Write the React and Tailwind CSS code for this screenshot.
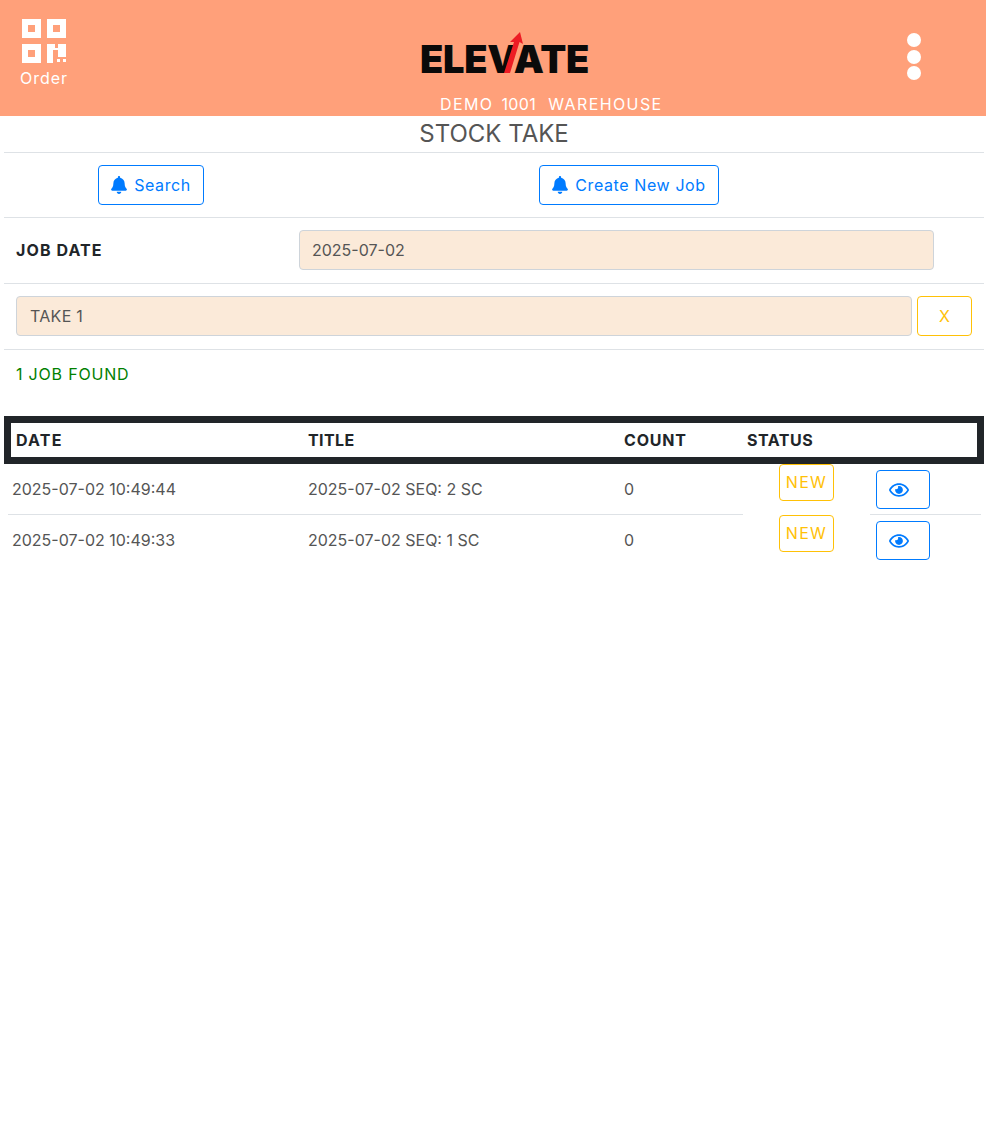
import React from 'react';
import { FaRegEye } from 'react-icons/fa';

const jobs = [
  { date: '2025-07-02 10:49:44', title: '2025-07-02 SEQ: 2 SC', count: 0 },
  { date: '2025-07-02 10:49:33', title: '2025-07-02 SEQ: 1 SC', count: 0 },
];

function QrIcon() {
  return (
    <svg width="44" height="44" viewBox="0 0 44 44" fill="#fff">
      <path fillRule="evenodd" d="M0 0h19v19H0zM6 6v7h7V6z" />
      <path fillRule="evenodd" d="M25 0h19v19H25zM31 6v7h7V6z" />
      <path fillRule="evenodd" d="M0 25h19v19H0zM6 31v7h7v-7z" />
      <path d="M25 25h8v4h3v-4h8v13h-8v-7h-5v13h-6z" />
      <path d="M35 40h3v3h-3zM41 40h3v3h-3z" />
    </svg>
  );
}

function BellIcon() {
  return (
    <svg width="16" height="18" viewBox="0 0 448 512" fill="#007bff">
      <path d="M224 512c35.32 0 63.97-28.65 63.97-64H160.03c0 35.35 28.65 64 63.97 64zm215.39-149.71c-19.32-20.76-55.47-51.99-55.47-154.29 0-77.7-54.48-139.9-127.94-155.16V32c0-17.67-14.32-32-31.98-32s-31.98 14.33-31.98 32v20.84C118.56 68.1 64.08 130.3 64.08 208c0 102.3-36.15 133.53-55.47 154.29-6 6.45-8.66 14.16-8.61 21.71.11 16.4 12.98 32 32.1 32h383.8c19.12 0 32-15.6 32.1-32 .05-7.55-2.61-15.27-8.61-21.71z" />
    </svg>
  );
}

function Logo() {
  return (
    <div className="relative h-[56px] w-[170px]">
      <span className="absolute left-0 top-[15px] text-[38px] font-black leading-[44px] tracking-[-0.3px] text-[#0a0a0a]">
        ELEVATE
      </span>
      <svg className="absolute left-[83px] top-[10px]" width="20" height="42" viewBox="0 0 20 42" fill="#ed1c24">
        <path d="M1 41 L11 10 L7 10 L17 0 L20 12 L16.5 10 L7 41 Z" />
      </svg>
    </div>
  );
}

function OutlineButton({ children, className }) {
  return (
    <button className={`flex h-[40px] items-center justify-center rounded border border-[#007bff] bg-white tracking-[0.6px] text-[#007bff] ${className}`}>
      {children}
    </button>
  );
}

export default function App() {
  return (
    <div className="min-h-[1140px] bg-white font-['Inter',sans-serif] text-[16px] text-[#555]">
      <header className="relative flex h-[116px] bg-[#ffa07a] pl-[420px] text-white">
        <div className="absolute left-[20px] top-[19px] flex w-[48px] flex-col items-center">
          <QrIcon />
          <span className="mt-[3px] text-[16px] leading-[24px] tracking-[1px]">Order</span>
        </div>
        <div className="flex flex-col pt-[22px]">
          <Logo />
          <div className="ml-[20px] mt-[16px] flex gap-[8px] text-[16px] leading-[24px] tracking-[1.4px]">
            <span>DEMO</span>
            <span className="tracking-[0.4px]">1001</span>
            <span className="ml-[4px]">WAREHOUSE</span>
          </div>
        </div>
        <div className="absolute left-[907px] top-[33px] flex flex-col gap-[2.5px]">
          <div className="h-[14px] w-[14px] rounded-full bg-white" />
          <div className="h-[14px] w-[14px] rounded-full bg-white" />
          <div className="h-[14px] w-[14px] rounded-full bg-white" />
        </div>
      </header>

      <div className="pl-[4px] pr-[2px]">
        <h1 className="h-[37px] border-b border-[#dee2e6] text-center text-[24px] font-normal leading-[36px]">STOCK TAKE</h1>

        <div className="flex h-[65px] items-center border-b border-[#dee2e6]">
          <div className="flex w-[294px] justify-center">
            <OutlineButton className="w-[106px] gap-[7px]">
              <BellIcon />
              Search
            </OutlineButton>
          </div>
          <div className="flex w-[662px] justify-center">
            <OutlineButton className="w-[180px] gap-[7px]">
              <BellIcon />
              Create New Job
            </OutlineButton>
          </div>
        </div>

        <div className="flex h-[66px] items-center border-b border-[#dee2e6] pb-[1px] pl-[12px]">
          <span className="w-[283px] font-bold tracking-[1.1px] text-[#212529]">JOB DATE</span>
          <div className="flex h-[40px] w-[635px] items-center rounded border border-[#ced4da] bg-[#fbead9] px-[12px]">2025-07-02</div>
        </div>

        <div className="flex h-[66px] items-center gap-[5px] border-b border-[#dee2e6] pb-[1px] pl-[12px]">
          <div className="flex h-[40px] w-[896px] items-center rounded border border-[#ced4da] bg-[#fbead9] px-[13px] tracking-[0.3px]">TAKE 1</div>
          <button className="h-[40px] w-[55px] rounded border border-[#ffc107] bg-white text-[#ffc107]">X</button>
        </div>

        <div className="pl-[12px] pt-[12px] leading-[24px] tracking-[0.8px] text-[#008000]">1 JOB FOUND</div>

        <div className="mt-[30px] grid h-[48px] grid-cols-[292px_316px_123px_1fr] items-center border-[7px] border-[#212529] pl-[5px] font-bold text-[#212529]">
          <span className="tracking-[1.2px]">DATE</span>
          <span className="tracking-[0.4px]">TITLE</span>
          <span className="tracking-[0.8px]">COUNT</span>
          <span className="tracking-[0.5px]">STATUS</span>
        </div>

        {jobs.map((job, i) => (
          <div key={job.date} className="flex h-[51px] pl-[4px]">
            <div className={`grid w-[735px] grid-cols-[296px_316px_1fr] items-center border-b pl-[4px] ${i === 0 ? 'border-[#dee2e6]' : 'border-transparent'}`}>
              <span>{job.date}</span>
              <span>{job.title}</span>
              <span>{job.count}</span>
            </div>
            <div className="flex w-[127px] justify-center">
              <div className="flex h-[37px] w-[55px] items-center justify-center rounded border border-[#ffc107] pb-[1px] tracking-[1.3px] text-[#ffc107]">NEW</div>
            </div>
            <div className={`w-[111px] border-b pl-[6px] pt-[6px] ${i === 0 ? 'border-[#dee2e6]' : 'border-transparent'}`}>
              <button className="flex h-[39px] w-[54px] items-center rounded border border-[#007bff] pl-[12px] text-[#007bff]">
                <FaRegEye size={20} />
              </button>
            </div>
          </div>
        ))}
      </div>
    </div>
  );
}
